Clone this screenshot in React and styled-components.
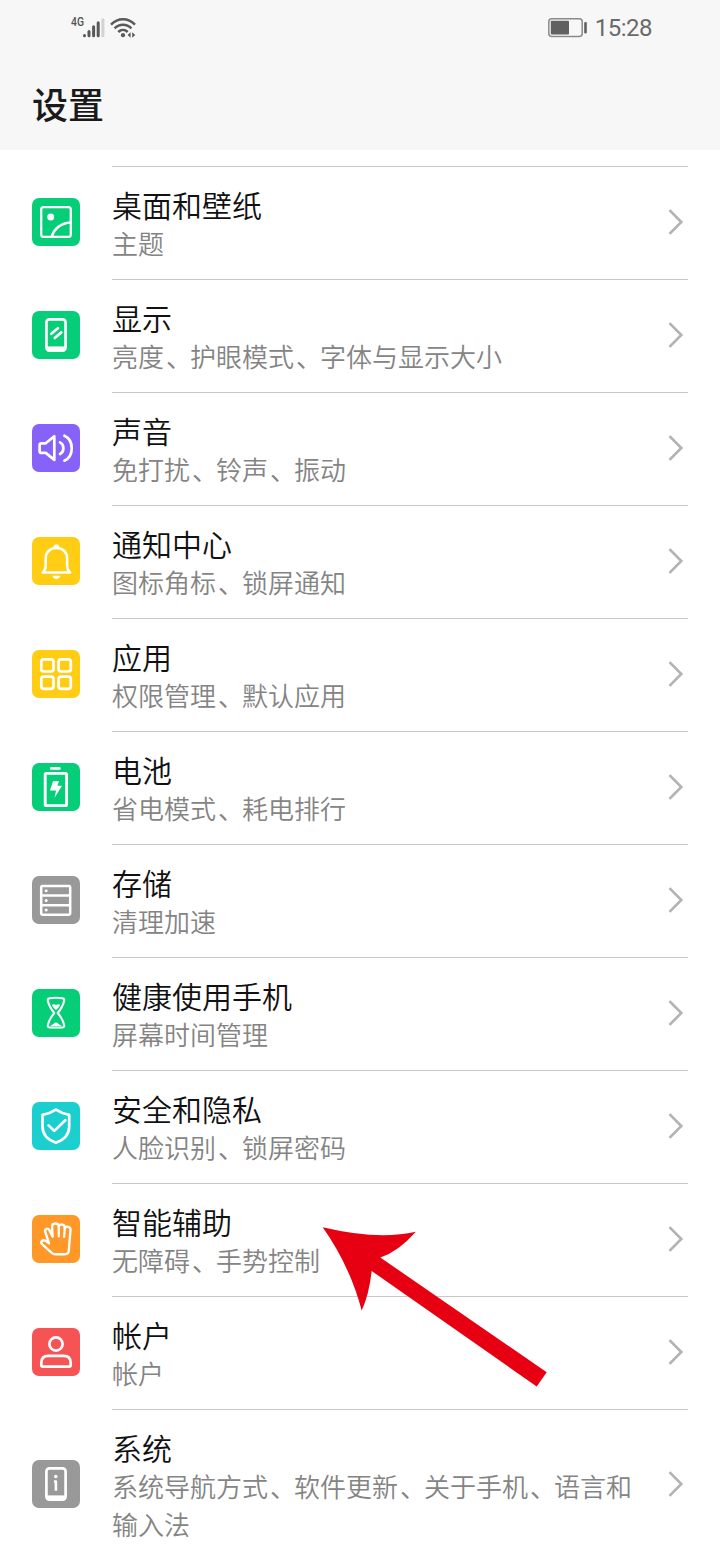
import React from 'react';
import styled, { createGlobalStyle } from 'styled-components';

const GlobalStyle = createGlobalStyle`
  * {
    box-sizing: border-box;
  }
  body {
    margin: 0;
    background-color: #fff;
    font-family: Roboto, 'Noto Sans CJK SC', sans-serif;
  }
`;

const colors = {
  green: '#06ce78',
  purple: '#8662f8',
  yellow: '#ffce14',
  gray: '#999999',
  cyan: '#1ccfcf',
  orange: '#ff9826',
  red: '#f65454',
};

const Screen = styled.div`
  position: relative;
  width: 720px;
  height: 1560px;
  overflow: hidden;
  background-color: #fff;
`;

const Header = styled.header`
  height: 150px;
  background-color: #f7f7f7;
`;

const StatusBar = styled.div`
  display: flex;
  justify-content: space-between;
  align-items: center;
  height: 56px;
  padding: 0 68px 0 71px;
`;

const StatusGroup = styled.div`
  display: flex;
  align-items: center;
`;

const Network = styled.span`
  width: 12px;
  margin-bottom: 12px;
  font-size: 13px;
  font-weight: 500;
  line-height: 14px;
  color: #555;
  transform: scaleX(0.8);
  transform-origin: left;
`;

const Time = styled.span`
  margin-left: 7px;
  font-size: 24px;
  letter-spacing: -0.5px;
  line-height: 28px;
  color: #6a6a6a;
`;

const Title = styled.h1`
  margin: 0;
  padding: 20px 32px 0;
  font-family: 'Noto Sans CJK SC', sans-serif;
  font-size: 36px;
  font-weight: 500;
  line-height: 54px;
  color: #1a1a1a;
`;

const List = styled.ul`
  margin: 0;
  padding: 16px 32px 0;
  list-style: none;
`;

const Item = styled.li`
  display: flex;
  align-items: center;
`;

const IconBox = styled.div`
  flex-shrink: 0;
  width: 48px;
  height: 48px;
  margin: 0 32px 1px 0;
  border-radius: 7px;
  background-color: ${({ $color }) => $color};

  svg {
    display: block;
  }
`;

const ItemBody = styled.div`
  display: flex;
  flex: 1;
  justify-content: space-between;
  align-items: center;
  padding: 19px 0 17px;
  border-top: 1px solid #c8c8c8;
`;

const Texts = styled.div`
  width: 530px;
  font-family: 'Noto Sans CJK SC', sans-serif;
`;

const Name = styled.div`
  margin-bottom: 1px;
  font-size: 30px;
  font-weight: 350;
  line-height: 37px;
  color: #111;
`;

const Summary = styled.div`
  font-size: 26px;
  font-weight: 350;
  line-height: 38px;
  color: #848484;
`;

// nudges the enumeration comma right inside its 26px cell
const Comma = styled.span`
  margin-left: 2px;
  letter-spacing: -2px;
`;

const Chevron = styled.svg`
  margin: 0 3px 4px 0;
`;

const Pointer = styled.svg`
  position: absolute;
  top: 1220px;
  left: 315px;
`;

function SignalIcon() {
  return (
    <svg width="22" height="22" viewBox="0 0 22 22" strokeWidth="3" strokeLinecap="round" stroke="#595959">
      <path d="M1.500 18.400v.3M6 14.500v4.200M10.600 9.800v8.900M15.200 5.800v12.900" />
      <path d="M19.900 2.800v15.900" stroke="#d2d2d2" />
    </svg>
  );
}

function WifiIcon() {
  return (
    <svg width="28" height="22" viewBox="0 0 28 22" fill="none" stroke="#595959" strokeWidth="2.500">
      <path d="M1 7.600c7-7 17-7 24 0" />
      <path d="M4.600 11.300c4.900-4.900 11.900-4.900 16.800 0" />
      <path d="M8.300 15c2.700-2.700 6.700-2.700 9.400 0" />
      <circle cx="13" cy="18.200" r="2.100" fill="#595959" stroke="none" />
      <path d="M20.600 15.300v5.400l-3-2.700zM22.200 15.300v5.400l3-2.700z" fill="#595959" stroke="none" />
    </svg>
  );
}

function BatteryStatusIcon() {
  return (
    <svg width="40" height="20" viewBox="0 0 40 20" fill="none">
      <rect x="0.800" y="0.800" width="33.400" height="17.800" rx="3" stroke="#8a8a8a" strokeWidth="1.500" />
      <rect x="2.800" y="2.800" width="18.200" height="13.800" rx="0.800" fill="#606060" />
      <rect x="36.200" y="4" width="2.600" height="11.500" rx="1" fill="#606060" />
    </svg>
  );
}

function PhoneFrame() {
  return (
    <>
      <rect x="14.400" y="8.400" width="19.200" height="31.200" rx="3" />
      <path d="M15 37.300h18" strokeWidth="3.800" />
    </>
  );
}

// 48x48 line drawings, one per settings entry
const drawings = {
  wallpaper: (
    <>
      <rect x="9.200" y="9.200" width="29.600" height="29.600" rx="2.400" strokeWidth="2.300" />
      <path d="M19.800 38.500C22 30.800 29 24.900 38.600 24.500" />
      <circle cx="18.700" cy="19" r="3.500" fill="#fff" stroke="none" />
    </>
  ),
  display: (
    <>
      <PhoneFrame />
      <path d="M19.300 22.800l6.600-5.600M22.700 27l6.600-5.600" strokeLinecap="round" />
    </>
  ),
  sound: (
    <>
      <path d="M22.300 12.300v23.600l-8.600-7H9.600a2 2 0 0 1-2-2v-5.600a2 2 0 0 1 2-2h4.100z" />
      <path d="M28 18.400c4.500 2.200 4.500 9.400 0 11.600M32.400 11.700c9.800 4.600 9.800 20.400 0 25" strokeLinecap="round" />
    </>
  ),
  notification: (
    <>
      <path d="M10.600 35.600h27.600c-2.200-1.800-3.100-3.400-3.100-6.600v-7.800c0-6.200-4.500-10.300-10.700-10.300s-10.700 4.100-10.700 10.300V29c0 3.200-.9 4.800-3.100 6.600z" strokeWidth="2.500" />
      <path d="M21.600 10a2.800 2.800 0 1 1 5.600 0M20.500 38.800h7.800c-.4 4.200-7.400 4.200-7.800 0z" fill="#fff" stroke="none" />
    </>
  ),
  apps: (
    <>
      <rect x="9.300" y="9.300" width="12.200" height="12.200" rx="2.500" />
      <rect x="26.600" y="9.300" width="12.200" height="12.200" rx="2.500" />
      <rect x="9.300" y="26.600" width="12.200" height="12.200" rx="2.500" />
      <rect x="26.600" y="26.600" width="12.200" height="12.200" rx="2.500" />
    </>
  ),
  battery: (
    <>
      <rect x="13.200" y="10.400" width="21.400" height="32.200" rx="1.200" strokeWidth="2.900" />
      <path d="M19.300 5.400h8" strokeLinecap="round" />
      <path d="M21 18.300h6l-1.700 4.500H30l-7.500 12 1.600-7.400H18z" fill="#fff" stroke="none" />
    </>
  ),
  storage: (
    <>
      <rect x="9.200" y="10" width="29" height="28.800" rx="1.200" strokeWidth="2.500" />
      <path d="M9.500 19.600h28.600M9.500 29.300h28.600" strokeWidth="2.500" />
      <g fill="#fff" stroke="none">
        <circle cx="14.200" cy="14.800" r="1.500" />
        <circle cx="14.200" cy="24.500" r="1.500" />
        <circle cx="14.200" cy="34" r="1.500" />
      </g>
    </>
  ),
  hourglass: (
    <>
      <path
        d="M17.500 9.200c4-.7 9-.7 13 0 1.400.3 2 1 1.700 2.300-1 5.300-3.500 9-6.500 12.500 3 3.500 5.500 7.200 6.500 12.500.3 1.300-.3 1.900-1.700 2h-13c-1.400-.1-2-.7-1.700-2 1-5.300 3.500-9 6.500-12.500-3-3.500-5.500-7.200-6.500-12.500-.3-1.300.3-2 1.700-2.300z"
        strokeWidth="2"
      />
      <path d="M20 15.800c1.600-.9 3-.6 4 .3 1.200-.9 2.500-1.200 4-.3-.5 2.100-2 3.600-4 5.200-2-1.600-3.500-3.100-4-5.200zM18.400 37c1.200-1.200 2.500-1.500 3.300-2.300 1.300-1.600 3.300-1.600 4.600 0 .8.800 2.100 1.100 3.300 2.300z" fill="#fff" stroke="none" />
    </>
  ),
  shield: (
    <>
      <path d="M23.900 7.700c4 2.700 8.400 4.300 13.300 5.200v11.600c0 8.200-5.300 13.400-13.300 16.200-8-2.800-13.400-8-13.400-16.200V12.900c5-.9 9.400-2.500 13.400-5.200z" />
      <path d="M16.600 23.400l5.700 5.500 11-10.600" strokeLinecap="round" />
    </>
  ),
  hand: (
    <>
      <path
        d="M17 28.400L13.300 17c-1-3.300 3-4.600 4.200-1.600l3.100 6.200-.5-9.800c-.1-4.200 6.300-4.600 6.700-.4 1-3 6.400-2.400 6 1.700 1.500-2.400 5.900-1.500 5.700 1.900l-1.700 20.500c-.2 2.400-1.700 3.800-4 3.800H23.500c-1.500 0-2.700-.5-3.800-1.500l-9.400-8.400c-2.500-2.300.3-5.300 3.100-3.700z"
        strokeWidth="2.400"
      />
      <path d="M26.800 11.400v10M32.800 13.100l-.7 8.700" strokeWidth="2.300" strokeLinecap="round" />
    </>
  ),
  account: (
    <>
      <circle cx="24" cy="16" r="6.600" />
      <path d="M10.400 38.700c-.7 0-1.100-.4-1.100-1.100V35c0-4.400 2.600-7.100 7-7.100h15.400c4.400 0 7 2.700 7 7.100v2.600c0 .7-.4 1.100-1.100 1.100z" />
    </>
  ),
  system: (
    <>
      <PhoneFrame />
      <path d="M22 21.600h1.900v9.100" strokeWidth="2.600" />
      <circle cx="23.800" cy="16.500" r="1.800" fill="#fff" stroke="none" />
    </>
  ),
};

const settings = [
  { icon: 'wallpaper', color: colors.green, name: '桌面和壁纸', summary: '主题' },
  { icon: 'display', color: colors.green, name: '显示', summary: '亮度、护眼模式、字体与显示大小' },
  { icon: 'sound', color: colors.purple, name: '声音', summary: '免打扰、铃声、振动' },
  { icon: 'notification', color: colors.yellow, name: '通知中心', summary: '图标角标、锁屏通知' },
  { icon: 'apps', color: colors.yellow, name: '应用', summary: '权限管理、默认应用' },
  { icon: 'battery', color: colors.green, name: '电池', summary: '省电模式、耗电排行' },
  { icon: 'storage', color: colors.gray, name: '存储', summary: '清理加速' },
  { icon: 'hourglass', color: colors.green, name: '健康使用手机', summary: '屏幕时间管理' },
  { icon: 'shield', color: colors.cyan, name: '安全和隐私', summary: '人脸识别、锁屏密码' },
  { icon: 'hand', color: colors.orange, name: '智能辅助', summary: '无障碍、手势控制' },
  { icon: 'account', color: colors.red, name: '帐户', summary: '帐户' },
  { icon: 'system', color: colors.gray, name: '系统', summary: '系统导航方式、软件更新、关于手机、语言和输入法' },
];

function SettingItem({ icon, color, name, summary }) {
  return (
    <Item>
      <IconBox $color={color}>
        <svg width="48" height="48" viewBox="0 0 48 48" fill="none" stroke="#fff" strokeWidth="2.700" strokeLinejoin="round">
          {drawings[icon]}
        </svg>
      </IconBox>
      <ItemBody>
        <Texts>
          <Name>{name}</Name>
          <Summary>
            {summary.split('、').map((part, index) => (
              <React.Fragment key={part}>
                {index > 0 && <Comma>、</Comma>}
                {part}
              </React.Fragment>
            ))}
          </Summary>
        </Texts>
        <Chevron width="18" height="28" viewBox="0 0 18 28" fill="none" stroke="#b2b2b2" strokeWidth="2.600">
          <path d="M2.500 2.200L14.300 14 2.500 25.800" />
        </Chevron>
      </ItemBody>
    </Item>
  );
}

function App() {
  return (
    <Screen lang="zh-CN">
      <GlobalStyle />
      <Header>
        <StatusBar>
          <StatusGroup>
            <Network>4G</Network>
            <SignalIcon />
            <svg width="5" height="1" />
            <WifiIcon />
          </StatusGroup>
          <StatusGroup>
            <BatteryStatusIcon />
            <Time>15:28</Time>
          </StatusGroup>
        </StatusBar>
        <Title>设置</Title>
      </Header>
      <List>
        {settings.map((item) => (
          <SettingItem key={item.name} {...item} />
        ))}
      </List>
      <Pointer width="240" height="175" viewBox="315 1220 240 175">
        <path
          d="M322.700 1227.300Q378 1240.500 415.900 1231.800Q398 1252 380.300 1257.500L546.700 1372.300 536.700 1386.500 371.700 1271Q369 1295 361.700 1310.500Q350 1266 322.700 1227.300z"
          fill="#e60012"
        />
      </Pointer>
    </Screen>
  );
}

export default App;
